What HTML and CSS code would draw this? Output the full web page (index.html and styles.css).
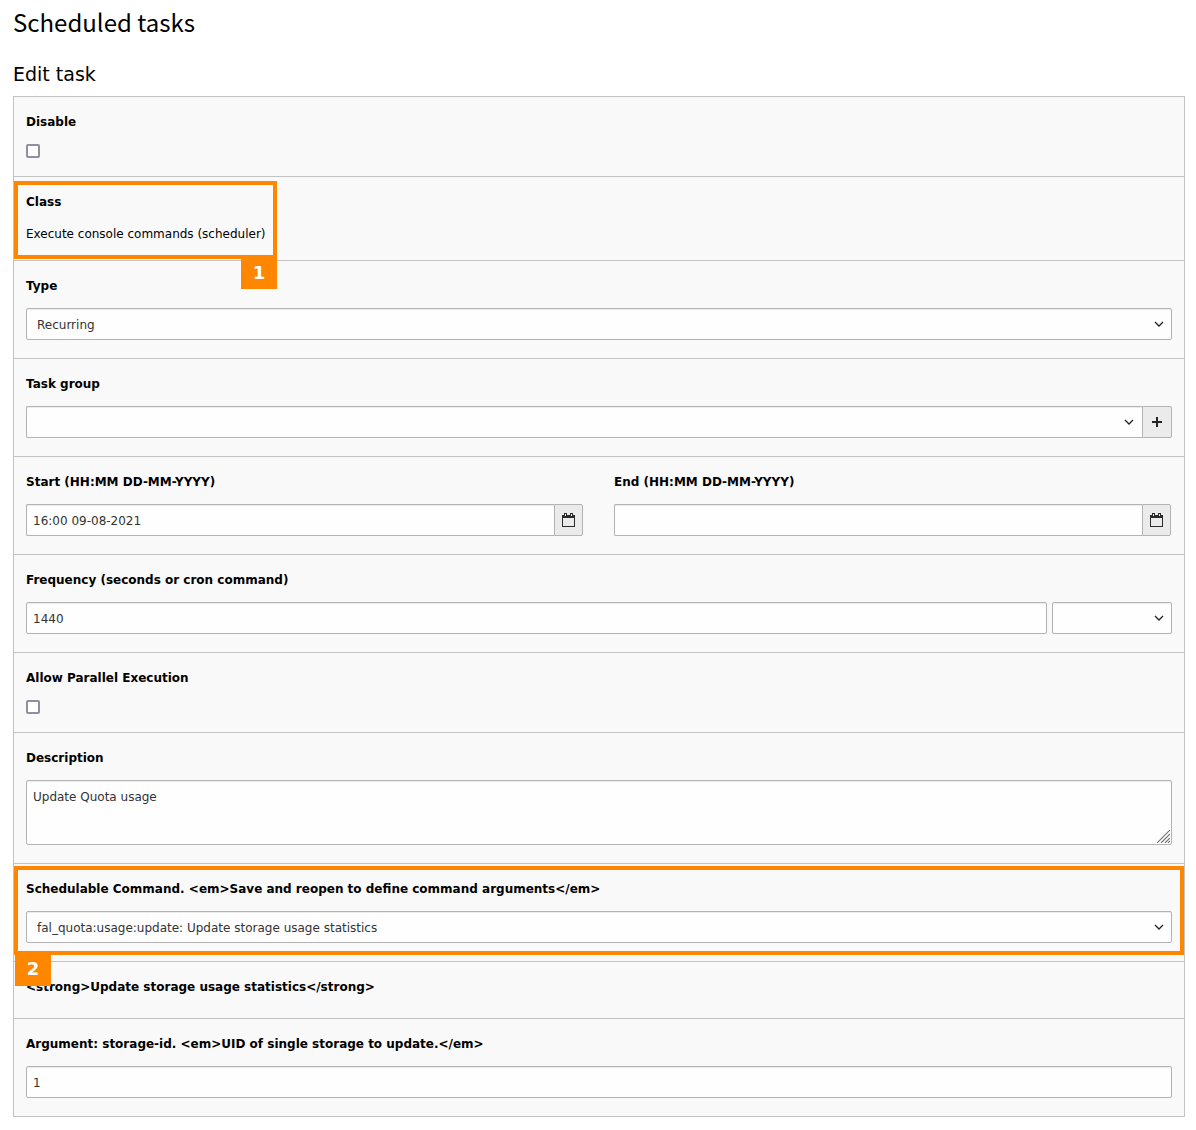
FILE: index.html
```html
<!DOCTYPE html>
<html lang="en">
<head>
<meta charset="UTF-8">
<meta name="viewport" content="width=device-width, initial-scale=1.0">
<title>Scheduled tasks</title>
<link rel="stylesheet" href="styles.css">
</head>
<body>
<svg class="sprite" width="0" height="0" aria-hidden="true">
<symbol id="chevron" viewBox="0 0 10 6"><path d="M1 1l4 4 4-4" fill="none" stroke="#222" stroke-width="1.3"/></symbol>
<symbol id="plus" viewBox="0 0 10 10"><path d="M4 0h2v4h4v2H6v4H4V6H0V4h4z" fill="#222"/></symbol>
<symbol id="calendar" viewBox="0 0 13 14"><path d="M2 0h3v2h3V0h3v2h2v12H0V2h2zM3 1v2h1V1zM9 1v2h1V1zM1 5v8h11V5z" fill="#2b2b2b" fill-rule="evenodd"/></symbol>
</svg>

<h1>Scheduled tasks</h1>
<h2>Edit task</h2>

<form class="panel">
<div class="section">
<label for="disable">Disable</label>
<input type="checkbox" id="disable">
</div>

<div class="section">
<div class="label">Class</div>
<div class="text">Execute console commands (scheduler)</div>
<div class="highlight highlight-class"><span class="badge">1</span></div>
</div>

<div class="section">
<label for="type">Type</label>
<div class="select">
<select id="type"><option>Recurring</option></select>
<svg class="chevron"><use href="#chevron"/></svg>
</div>
</div>

<div class="section">
<label for="group">Task group</label>
<div class="group">
<div class="select">
<select id="group"><option></option></select>
<svg class="chevron"><use href="#chevron"/></svg>
</div>
<button type="button" class="btn-add" aria-label="Add task group"><svg width="10" height="10"><use href="#plus"/></svg></button>
</div>
</div>

<div class="section dates">
<div>
<label for="start">Start (HH:MM DD-MM-YYYY)</label>
<div class="group">
<input type="text" id="start" value="16:00 09-08-2021">
<button type="button" aria-label="Pick start date"><svg width="13" height="14"><use href="#calendar"/></svg></button>
</div>
</div>
<div>
<label for="end">End (HH:MM DD-MM-YYYY)</label>
<div class="group">
<input type="text" id="end">
<button type="button" aria-label="Pick end date"><svg width="13" height="14"><use href="#calendar"/></svg></button>
</div>
</div>
</div>

<div class="section">
<label for="frequency">Frequency (seconds or cron command)</label>
<div class="frequency">
<input type="text" id="frequency" value="1440">
<div class="select">
<select aria-label="Frequency presets"><option></option></select>
<svg class="chevron"><use href="#chevron"/></svg>
</div>
</div>
</div>

<div class="section">
<label for="parallel">Allow Parallel Execution</label>
<input type="checkbox" id="parallel">
</div>

<div class="section">
<label for="description">Description</label>
<div class="area">
<textarea id="description">Update Quota usage</textarea>
<svg class="grip" width="13" height="13" viewBox="0 0 13 13"><path d="M0 13L13 0M4 13l9-9M8 13l5-5M11 13l2-2" stroke="#777" stroke-width="1.2"/></svg>
</div>
</div>

<div class="section">
<label for="command">Schedulable Command. &lt;em&gt;Save and reopen to define command arguments&lt;/em&gt;</label>
<div class="select">
<select id="command"><option>fal_quota:usage:update: Update storage usage statistics</option></select>
<svg class="chevron"><use href="#chevron"/></svg>
</div>
<div class="highlight highlight-command"><span class="badge">2</span></div>
</div>

<div class="section section-title">
<div class="label">&lt;strong&gt;Update storage usage statistics&lt;/strong&gt;</div>
</div>

<div class="section">
<label for="storage">Argument: storage-id. &lt;em&gt;UID of single storage to update.&lt;/em&gt;</label>
<input type="text" id="storage" value="1">
</div>
</form>
</body>
</html>
```
FILE: styles.css
```css
* {
box-sizing: border-box;
}

body {
margin: 0;
padding: 6px 11px 13px 13px;
background: #fff;
color: #000;
font-family: Verdana, "DejaVu Sans", sans-serif;
font-size: 12px;
line-height: 18px;
}

.sprite {
position: absolute;
}

h1 {
margin: 0 0 24px;
font-family: "Source Sans Pro", "Noto Sans CJK SC", sans-serif;
font-size: 24px;
font-weight: 400;
line-height: 32px;
}

h2 {
margin: 0 0 10px;
font-size: 19px;
font-weight: 400;
line-height: 24px;
}

.panel {
border: 1px solid #c3c3c3;
border-top: 0;
background: #f9f9f9;
}

.section {
position: relative;
padding: 16px 12px 18px;
border-top: 1px solid #c3c3c3;
}

.section-title {
padding-bottom: 9px;
}

label,
.label {
display: block;
margin-bottom: 13px;
font-weight: 700;
}

.text {
padding-top: 1px;
margin-bottom: -1px;
}

input[type="text"],
select,
textarea {
display: block;
width: 100%;
height: 32px;
margin: 0;
padding: 2px 6px 0;
border: 1px solid #b3b3b3;
border-radius: 2px;
background: #fefefe;
box-shadow: inset 0 1px 1px rgba(0, 0, 0, .075);
color: #333;
font: inherit;
appearance: none;
}

select {
padding: 2px 30px 0 10px;
}

textarea {
height: 65px;
padding: 7px 6px;
resize: none;
}

input[type="checkbox"] {
display: block;
width: 14px;
height: 14px;
margin: 0;
border: 2px solid #8f8f9d;
border-radius: 2px;
background: #fff;
appearance: none;
}

.select,
.area {
position: relative;
}

.chevron {
position: absolute;
top: 13px;
right: 8px;
width: 10px;
height: 6px;
pointer-events: none;
}

.grip {
position: absolute;
right: 2px;
bottom: 2px;
pointer-events: none;
}

.group {
display: flex;
}

.group .select,
.group input {
flex: 1;
}

.group select,
.group input[type="text"] {
border-right: 0;
border-radius: 2px 0 0 2px;
}

button {
display: flex;
align-items: center;
justify-content: center;
width: 29px;
height: 32px;
padding: 0;
border: 1px solid #b3b3b3;
border-radius: 0 2px 2px 0;
background: #ebebeb;
}

.btn-add {
width: 30px;
}

.dates {
display: grid;
grid-template-columns: 1fr 1fr;
gap: 31px;
padding-right: 13px;
}

.frequency {
display: grid;
grid-template-columns: 1fr 120px;
gap: 5px;
}

/* numbered callouts */
.highlight {
position: absolute;
z-index: 1;
left: 0;
border: 4px solid #ff8700;
pointer-events: none;
}

.highlight-class {
top: 4px;
width: 263px;
height: 78px;
}

.highlight-command {
top: 2px;
right: 0;
height: 89px;
}

.badge {
position: absolute;
top: 100%;
width: 36px;
height: 34px;
padding-top: 4px;
background: #ff8700;
color: #fff;
font-family: "DejaVu Sans", sans-serif;
font-size: 18px;
font-weight: 700;
line-height: 28px;
text-align: center;
}

.highlight-class .badge {
right: -4px;
}

.highlight-command .badge {
left: -3px;
height: 35px;
}
```
